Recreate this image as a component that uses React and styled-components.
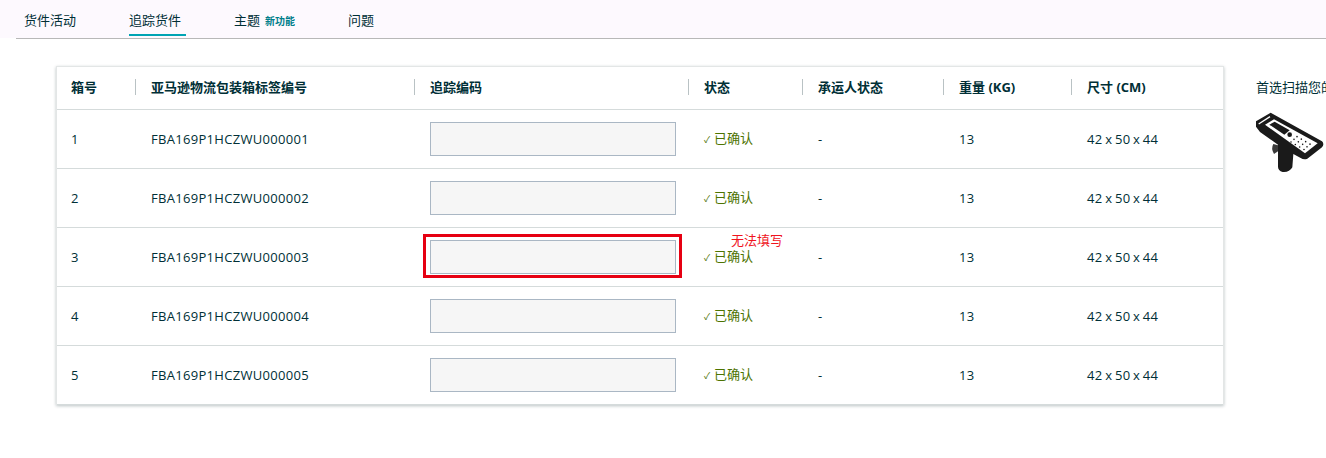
import React from 'react';
import styled, { createGlobalStyle } from 'styled-components';

const GlobalStyle = createGlobalStyle`
  html, body {
    margin: 0;
    padding: 0;
    background: #fff;
    overflow: hidden;
  }

  body {
    font-family: "Open Sans", "Noto Sans CJK SC", sans-serif;
    font-size: 13px;
    color: #002f36;
  }
`;

const rows = [
  'FBA169P1HCZWU000001',
  'FBA169P1HCZWU000002',
  'FBA169P1HCZWU000003',
  'FBA169P1HCZWU000004',
  'FBA169P1HCZWU000005',
];

const headers = ['箱号', '亚马逊物流包装箱标签编号', '追踪编码', '状态', '承运人状态', '重量 (KG)', '尺寸 (CM)'];

// keypad dots, laid along the slant of the device
const keypad = [];
for (let a = 0; a < 4; a++) {
  for (let b = 0; b < 3; b++) {
    keypad.push([141 + a * 13 - b * 9, 86 + a * 7.5 + b * 8]);
  }
}

const Scanner = () => (
  <ScannerIcon width="76" height="70" viewBox="0 0 228 210">
    <path d="M70 108 Q62 122 72 138 L84 130 L84 112 Z" fill="#3a3a3a" />
    <path
      d="M18 40 L62 14 L216 100 Q224 108 216 118 L172 152 Q162 157 152 150 L130 138 L127 178 Q118 194 98 192 Q84 188 84 176 L84 110 L30 72 L18 56 Z"
      fill="#1a1a1a"
    />
    <path d="M26 48 L60 26" stroke="#fff" strokeWidth="4" fill="none" />
    <path d="M45 50 L72 34 L203 106 L165 136 Z" fill="#fff" />
    <path d="M58 50 L74 41 L119 67 L103 80 Z" fill="#1a1a1a" />
    <circle cx="119" cy="80" r="7" fill="#1a1a1a" />
    {keypad.map(([cx, cy]) => (
      <circle key={`${cx}-${cy}`} cx={cx} cy={cy} r="2.4" fill="#1a1a1a" />
    ))}
  </ScannerIcon>
);

const App = () => {
  return (
    <Page>
      <GlobalStyle />
      <TabBar>
        <TabList>
          <Tab>货件活动</Tab>
          <Tab $active>追踪货件</Tab>
          <Tab>
            主题<NewBadge>新功能</NewBadge>
          </Tab>
          <Tab>问题</Tab>
        </TabList>
      </TabBar>
      <Content>
        <Card>
          <HeaderRow>
            {headers.map((title, i) => (
              <HeaderCell key={title} $divider={i < headers.length - 1}>{title}</HeaderCell>
            ))}
          </HeaderRow>
          {rows.map((label, i) => (
            <Row key={label}>
              <Cell>{i + 1}</Cell>
              <Cell>{label}</Cell>
              <Cell>
                <TrackingInput readOnly />
                {i === 2 && <Highlight />}
              </Cell>
              <StatusCell>
                <Check>✓</Check>已确认
                {i === 2 && <Warning>无法填写</Warning>}
              </StatusCell>
              <Cell>-</Cell>
              <Cell>13</Cell>
              <Cell>42 x 50 x 44</Cell>
            </Row>
          ))}
        </Card>
        <Aside>
          <AsideTitle>首选扫描您的追踪编码</AsideTitle>
          <Scanner />
        </Aside>
      </Content>
    </Page>
  );
};

const columns = '79px 279px 274px 114px 141px 128px 151px';

const Page = styled.div`
  width: 1326px;
  height: 458px;
  overflow: hidden;
`;

const TabBar = styled.div`
  height: 39px;
  background: linear-gradient(#fdf9fe 38px, #fff 38px);
  padding-left: 16px;
  box-sizing: border-box;
`;

const TabList = styled.div`
  display: flex;
  height: 39px;
  padding-left: 8px;
  box-sizing: border-box;
  border-bottom: 1px solid #b8b8b8;
  column-gap: 48px;
`;

const Tab = styled.div`
  height: ${(p) => (p.$active ? '34px' : '36px')};
  padding-right: 5px;
  line-height: 40px;
  font-size: 13px;
  white-space: nowrap;
  border-bottom: ${(p) => (p.$active ? '2px solid #00a4b4' : '0')};
`;

const NewBadge = styled.span`
  margin-left: 5px;
  font-size: 10px;
  font-weight: 700;
  color: #007e8a;
`;

const Content = styled.div`
  display: flex;
  padding: 27px 0 0 56px;
`;

const Card = styled.div`
  flex: none;
  width: 1166px;
  border: 1px solid #e3e6e6;
  border-bottom: 0;
  background: #fff;
  box-shadow: 0 1px 3px rgba(15, 43, 46, 0.28);
`;

const HeaderRow = styled.div`
  display: grid;
  grid-template-columns: ${columns};
  height: 43px;
  padding-bottom: 2px;
  align-items: center;
  border-bottom: 1px solid #d5dbdb;
  box-sizing: border-box;
`;

const HeaderCell = styled.div`
  padding-left: 15px;
  height: 16px;
  line-height: 16px;
  font-size: 13px;
  font-weight: 700;
  white-space: nowrap;
  border-right: ${(p) => (p.$divider ? '1px solid #b9c2c4' : '0')};

  &:first-child {
    padding-left: 14px;
  }
`;

const Row = styled.div`
  display: grid;
  grid-template-columns: ${columns};
  height: 59px;
  align-items: center;
  border-bottom: 1px solid #d5dbdb;
  box-sizing: border-box;
`;

const Cell = styled.div`
  position: relative;
  padding-left: 15px;
  font-size: 13px;
  letter-spacing: 0.3px;
  word-spacing: -1px;
  white-space: nowrap;

  &:first-child {
    padding-left: 14px;
  }
`;

const StatusCell = styled(Cell)`
  display: flex;
  align-items: center;
  height: 18px;
  margin-bottom: 4px;
  letter-spacing: 0;
  color: #4d7300;
`;

const Check = styled.span`
  flex: none;
  width: 10px;
  margin-top: 5px;
  font-size: 9px;
  line-height: 18px;
`;

const TrackingInput = styled.input`
  display: block;
  width: 246px;
  height: 34px;
  box-sizing: border-box;
  padding: 0;
  border: 1px solid #aab7c4;
  background: #f6f6f6;
  outline: none;
`;

const Highlight = styled.div`
  position: absolute;
  left: 8px;
  top: -6px;
  width: 259px;
  height: 44px;
  box-sizing: border-box;
  border: 3px solid #e60012;
`;

const Warning = styled.div`
  position: absolute;
  left: 42px;
  top: -14px;
  font-size: 13px;
  line-height: 16px;
  color: #f0141e;
`;

const Aside = styled.div`
  flex: none;
  width: 200px;
  margin-left: 32px;
  padding-top: 13px;
`;

const AsideTitle = styled.div`
  font-size: 13px;
  line-height: 17px;
  white-space: nowrap;
`;

const ScannerIcon = styled.svg`
  display: block;
  margin: 12px 0 0 -6px;
`;

export default App;
